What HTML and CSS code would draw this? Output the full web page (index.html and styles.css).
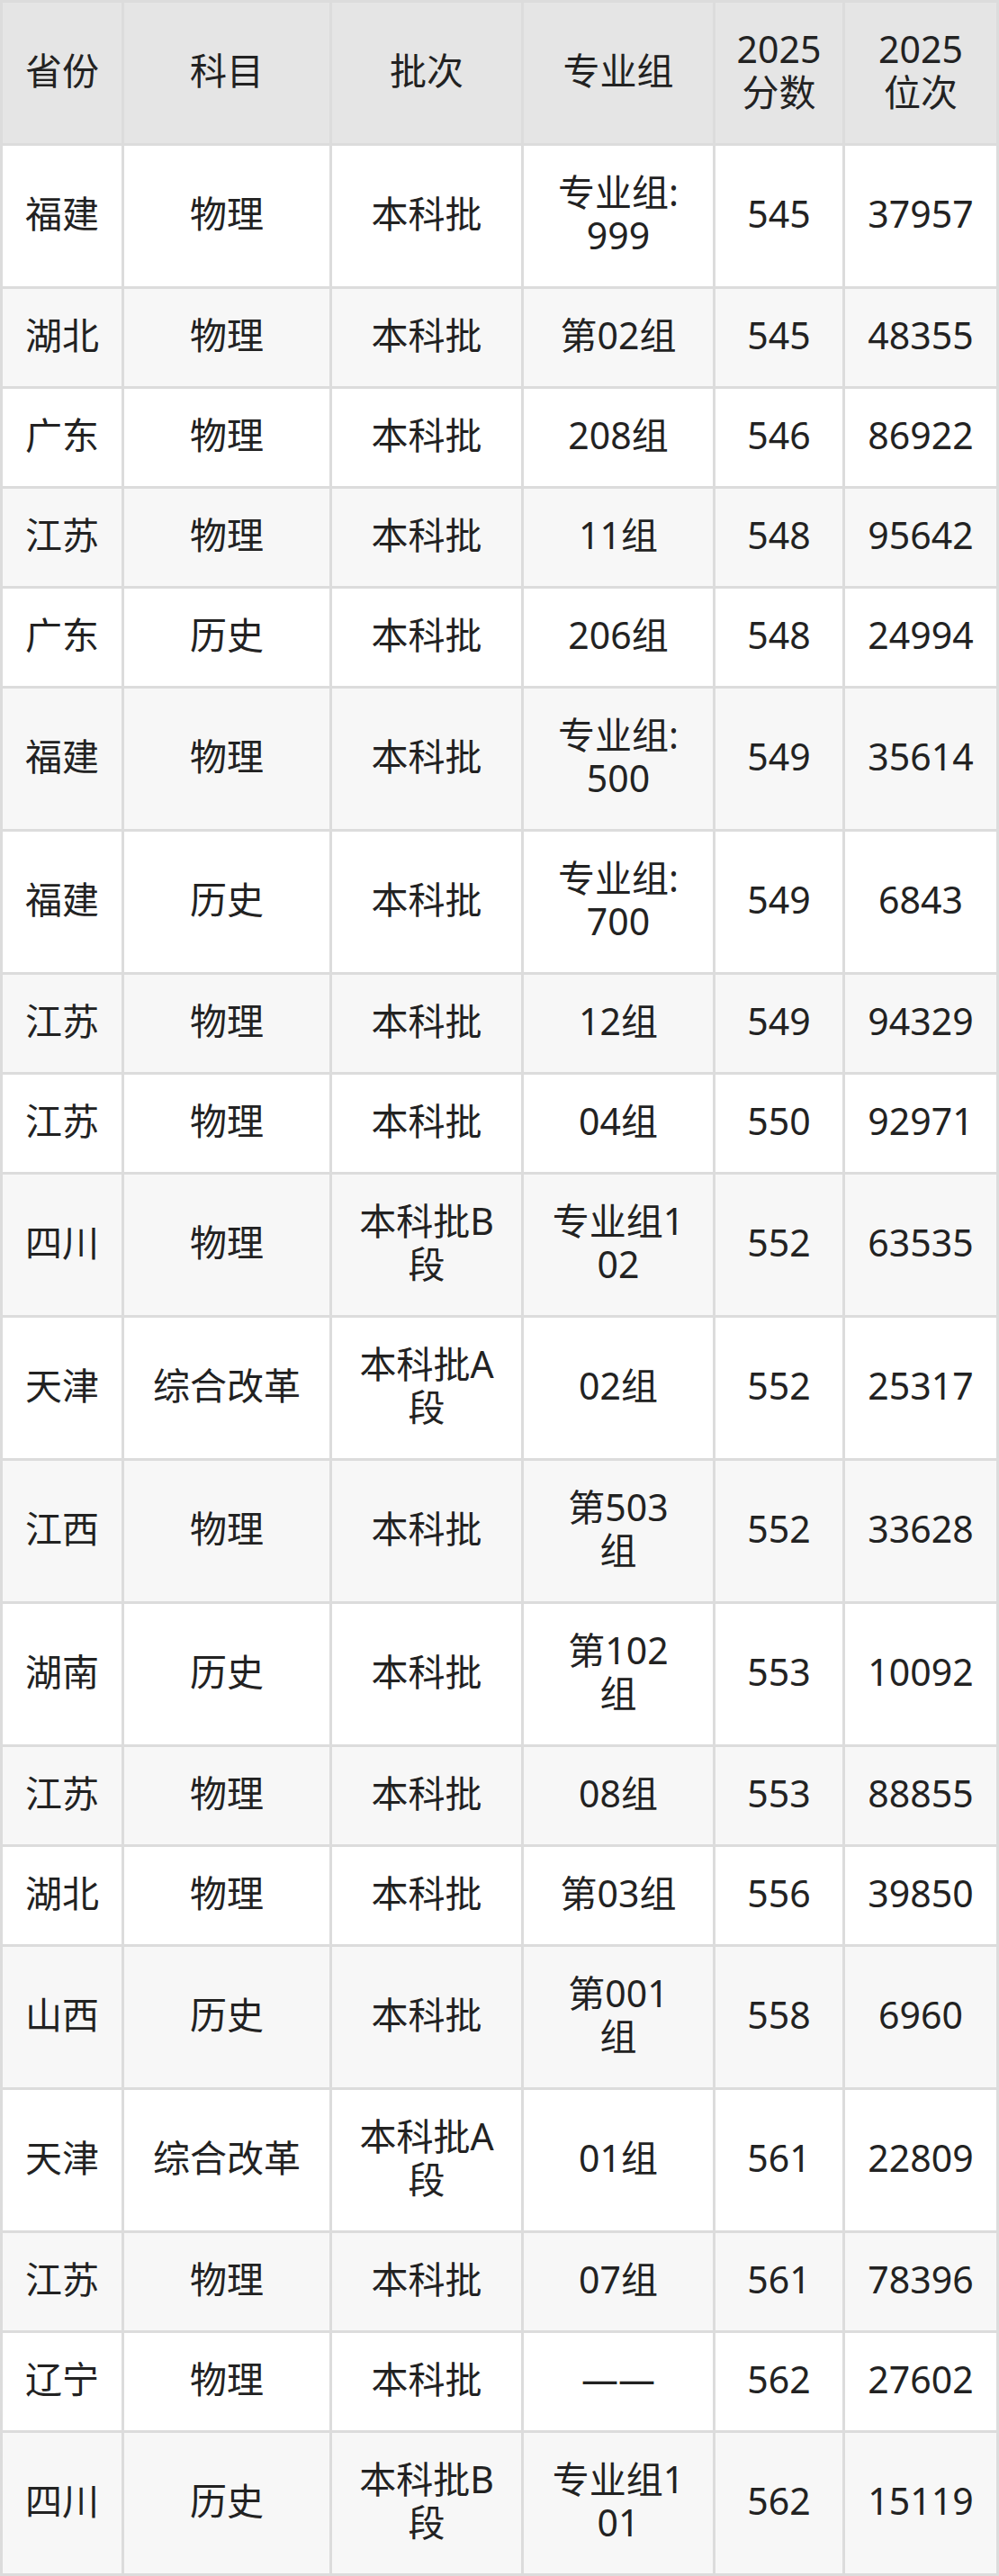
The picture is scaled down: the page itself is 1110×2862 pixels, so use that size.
FILE: index.html
```html
<!DOCTYPE html>
<html lang="zh-CN">
<head>
<meta charset="utf-8">
<title>分数位次</title>
<link rel="stylesheet" href="styles.css">
</head>
<body>
<table class="grid">
  <thead>
    <tr>
      <th class="c1">省份</th>
      <th class="c2">科目</th>
      <th class="c3">批次</th>
      <th class="c4">专业组</th>
      <th class="c5">2025分数</th>
      <th class="c6">2025位次</th>
    </tr>
  </thead>
  <tbody>
    <tr><td>福建</td><td>物理</td><td>本科批</td><td>专业组:999</td><td>545</td><td>37957</td></tr>
    <tr><td>湖北</td><td>物理</td><td>本科批</td><td>第02组</td><td>545</td><td>48355</td></tr>
    <tr><td>广东</td><td>物理</td><td>本科批</td><td>208组</td><td>546</td><td>86922</td></tr>
    <tr><td>江苏</td><td>物理</td><td>本科批</td><td>11组</td><td>548</td><td>95642</td></tr>
    <tr><td>广东</td><td>历史</td><td>本科批</td><td>206组</td><td>548</td><td>24994</td></tr>
    <tr><td>福建</td><td>物理</td><td>本科批</td><td>专业组:500</td><td>549</td><td>35614</td></tr>
    <tr><td>福建</td><td>历史</td><td>本科批</td><td>专业组:700</td><td>549</td><td>6843</td></tr>
    <tr><td>江苏</td><td>物理</td><td>本科批</td><td>12组</td><td>549</td><td>94329</td></tr>
    <tr><td>江苏</td><td>物理</td><td>本科批</td><td>04组</td><td>550</td><td>92971</td></tr>
    <tr><td>四川</td><td>物理</td><td>本科批B段</td><td>专业组102</td><td>552</td><td>63535</td></tr>
    <tr><td>天津</td><td>综合改革</td><td>本科批A段</td><td>02组</td><td>552</td><td>25317</td></tr>
    <tr><td>江西</td><td>物理</td><td>本科批</td><td>第503组</td><td>552</td><td>33628</td></tr>
    <tr><td>湖南</td><td>历史</td><td>本科批</td><td>第102组</td><td>553</td><td>10092</td></tr>
    <tr><td>江苏</td><td>物理</td><td>本科批</td><td>08组</td><td>553</td><td>88855</td></tr>
    <tr><td>湖北</td><td>物理</td><td>本科批</td><td>第03组</td><td>556</td><td>39850</td></tr>
    <tr><td>山西</td><td>历史</td><td>本科批</td><td>第001组</td><td>558</td><td>6960</td></tr>
    <tr><td>天津</td><td>综合改革</td><td>本科批A段</td><td>01组</td><td>561</td><td>22809</td></tr>
    <tr><td>江苏</td><td>物理</td><td>本科批</td><td>07组</td><td>561</td><td>78396</td></tr>
    <tr><td>辽宁</td><td>物理</td><td>本科批</td><td>——</td><td>562</td><td>27602</td></tr>
    <tr><td>四川</td><td>历史</td><td>本科批B段</td><td>专业组101</td><td>562</td><td>15119</td></tr>
  </tbody>
</table>
</body>
</html>
```

FILE: styles.css
```css
html, body {
  margin: 0;
  padding: 0;
  background: #ffffff;
}

.grid {
  width: 1110px;
  table-layout: fixed;
  border-collapse: separate;
  border-spacing: 3px;
  background: #dcdcdc;
  font-family: "Noto Sans", "Noto Sans CJK SC", sans-serif;
  font-size: 41px;
  line-height: 48px;
  color: #222222;
}

.grid th,
.grid td {
  box-sizing: border-box;
  padding: 27px 20px 33px;
  text-align: center;
  vertical-align: middle;
  font-weight: normal;
  word-break: break-all;
}

.grid th {
  background: #e5e5e5;
}

.grid td:nth-child(3),
.grid td:nth-child(4),
.grid th:nth-child(3),
.grid th:nth-child(4) {
  padding-left: 29.5px;
  padding-right: 29.5px;
}

.grid tbody tr:nth-child(odd) td {
  background: #ffffff;
}

.grid tbody tr:nth-child(even) td {
  background: #f7f7f7;
}

.c1 { width: 132px; }
.c2 { width: 228px; }
.c3 { width: 210px; }
.c4 { width: 210px; }
.c5 { width: 141px; }
.c6 { width: 168px; }
```
